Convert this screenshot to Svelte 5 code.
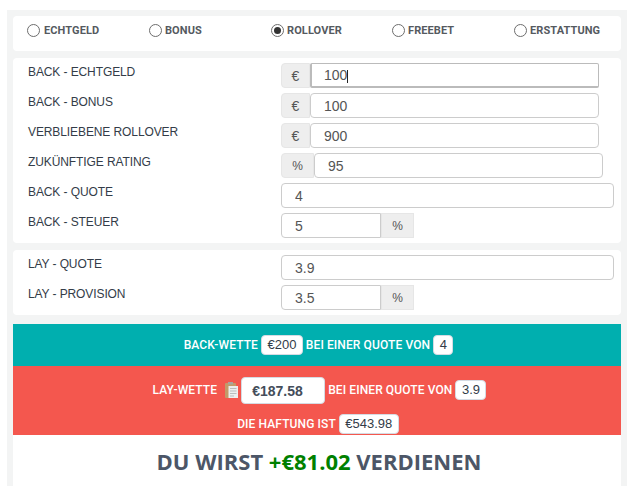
<script lang="ts">
	const kinds = [
		{ label: 'ECHTGELD', checked: false },
		{ label: 'BONUS', checked: false },
		{ label: 'ROLLOVER', checked: true },
		{ label: 'FREEBET', checked: false },
		{ label: 'ERSTATTUNG', checked: false }
	];

	const backRows = [
		{ label: 'BACK - ECHTGELD', value: '100', before: '€', focus: true },
		{ label: 'BACK - BONUS', value: '100', before: '€' },
		{ label: 'VERBLIEBENE ROLLOVER', value: '900', before: '€' },
		{ label: 'ZUKÜNFTIGE RATING', value: '95', before: '%', wide: true },
		{ label: 'BACK - QUOTE', value: '4', full: true },
		{ label: 'BACK - STEUER', value: '5', after: '%' }
	];

	const layRows = [
		{ label: 'LAY - QUOTE', value: '3.9', full: true },
		{ label: 'LAY - PROVISION', value: '3.5', after: '%' }
	];
</script>

{#snippet row(r)}
	<div class="row">
		<label class="row__label" for={r.label}>{r.label}</label>
		<div class="group" class:group--full={r.full} class:group--wide={r.wide} class:group--after={r.after}>
			{#if r.before}<span class="addon addon--before">{r.before}</span>{/if}
			<div class="field">
				<input id={r.label} class="input" class:input--focus={r.focus} type="text" value={r.value} />
				{#if r.focus}<span class="caret"></span>{/if}
			</div>
			{#if r.after}<span class="addon addon--after">{r.after}</span>{/if}
		</div>
	</div>
{/snippet}

<div class="calc">
	<section class="panel kinds">
		{#each kinds as kind}
			<label class="kind">
				<span class="radio" class:radio--on={kind.checked}></span>
				{kind.label}
			</label>
		{/each}
	</section>

	<section class="panel rows">
		{#each backRows as r}
			{@render row(r)}
		{/each}
	</section>

	<section class="panel rows">
		{#each layRows as r}
			{@render row(r)}
		{/each}
	</section>

	<section class="result">
		<div class="band band--back">
			<span>BACK-WETTE</span>
			<span class="chip">€200</span>
			<span>BEI EINER QUOTE VON</span>
			<span class="chip">4</span>
		</div>
		<div class="band band--lay">
			<div class="lay-line">
				<span>LAY-WETTE</span>
				<svg class="clip" viewBox="0 0 13 16" aria-hidden="true">
					<rect x="0" y="1" width="11" height="15" rx="1" fill="#c39a68" />
					<rect x="3.500" y="4" width="9.500" height="12" fill="#eceeee" />
					<path d="M5 6.500h6.500M5 9h6.500M5 11.500h6.500M5 14h4" stroke="#b9bdbd" stroke-width="1" />
					<rect x="3" y="0" width="5" height="2.500" fill="#a8a49c" />
				</svg>
				<span class="chip chip--big">€187.58</span>
				<span>BEI EINER QUOTE VON</span>
				<span class="chip">3.9</span>
			</div>
			<div class="liability">
				<span>DIE HAFTUNG IST</span>
				<span class="chip">€543.98</span>
			</div>
		</div>
		<h2 class="profit">DU WIRST <span class="profit__value">+€81.02</span> VERDIENEN</h2>
	</section>
</div>

<style>
	:global(body) {
		background: #fff;
		font-family: 'Liberation Sans', Arial, sans-serif;
	}

	.calc {
		box-sizing: border-box;
		width: 620px;
		height: 476px;
		margin: 10px 0 0 7px;
		padding: 6px 6px 0;
		background: #f3f4f4;
		overflow: hidden;
	}

	.panel {
		background: #fff;
		border-radius: 4px;
		margin-bottom: 7px;
	}

	.kinds {
		height: 35px;
		display: grid;
		grid-template-columns: 122px 122px 121px 122px 1fr;
		padding: 0 0 6px 14px;
		box-sizing: border-box;
		align-items: center;
	}

	.kind {
		display: flex;
		align-items: center;
		gap: 3px;
		font-family: Roboto, sans-serif;
		font-size: 11px;
		font-weight: 700;
		letter-spacing: 0.1px;
		color: #555a5f;
	}

	.kind:first-child {
		gap: 4px;
	}

	.radio {
		box-sizing: border-box;
		width: 13px;
		height: 13px;
		border: 1px solid #6d6d6d;
		border-radius: 50%;
		background: #fff;
		position: relative;
	}

	.radio--on::after {
		content: '';
		position: absolute;
		inset: 2px;
		border-radius: 50%;
		background: #333;
	}

	.rows {
		padding: 5px 0;
	}

	.row {
		display: flex;
		height: 25px;
		margin-bottom: 5px;
	}

	.row:last-child {
		margin-bottom: 0;
	}

	.row__label {
		width: 268px;
		padding-left: 15px;
		box-sizing: border-box;
		font-size: 12px;
		line-height: 18px;
		letter-spacing: -0.1px;
		color: #333c48;
	}

	.group {
		display: flex;
		width: 318px;
	}

	.group--full {
		width: 333px;
	}

	.group--wide {
		width: 322px;
	}

	.group--after {
		width: 133px;
	}

	.field {
		position: relative;
		flex: 1;
		min-width: 0;
	}

	.input {
		box-sizing: border-box;
		display: block;
		width: 100%;
		height: 25px;
		padding: 0 13px;
		border: 1px solid #ccc;
		border-radius: 4px;
		outline: none;
		background: #fff;
		font-family: 'Liberation Sans', Arial, sans-serif;
		font-size: 14px;
		color: #555;
	}

	.input--focus {
		border-color: #bbb;
		border-width: 1px 1px 2px 2px;
		border-radius: 2px;
		padding-left: 12px;
	}

	.caret {
		position: absolute;
		left: 37px;
		top: 7px;
		width: 1px;
		height: 13px;
		background: #222;
	}

	.addon {
		flex: none;
		box-sizing: border-box;
		display: flex;
		align-items: center;
		justify-content: center;
		background: #eee;
		border: 1px solid #e6e6e6;
		font-size: 12px;
		color: #555;
	}

	.addon--before {
		width: 29px;
		border-radius: 4px 0 0 4px;
		font-size: 14px;
	}

	.group--wide .addon--before {
		width: 33px;
		font-size: 12px;
	}

	.addon--after {
		width: 33px;
	}

	.group--after .input {
		border-radius: 4px 0 0 4px;
	}

	.result {
		margin-top: 9px;
		background: #fff;
	}

	.band {
		color: #fff;
		font-family: Roboto, sans-serif;
		font-size: 12px;
		font-weight: 500;
		letter-spacing: 0.1px;
		text-align: center;
	}

	.band--back {
		height: 42px;
		padding-left: 3px;
		background: #00afaf;
		display: flex;
		align-items: center;
		justify-content: center;
		gap: 3px;
	}

	.band--lay {
		height: 69px;
		background: #f4574e;
	}

	.lay-line {
		height: 48px;
		padding-left: 5px;
		display: flex;
		align-items: center;
		justify-content: center;
		gap: 3px;
	}

	.liability {
		padding-left: 2px;
		display: flex;
		align-items: center;
		justify-content: center;
		gap: 3px;
	}

	.chip {
		display: inline-block;
		box-sizing: border-box;
		height: 20px;
		line-height: 18px;
		padding: 0 5.5px;
		background: #fff;
		border: 1px solid #d5dbe3;
		border-radius: 4px;
		font-family: 'Liberation Sans', Arial, sans-serif;
		font-size: 13px;
		font-weight: 400;
		letter-spacing: 0;
		color: #333c48;
	}

	.chip--big {
		width: 84px;
		height: 27px;
		line-height: 26px;
		padding: 0 0 0 10px;
		text-align: left;
		font-size: 14px;
		font-weight: 700;
		color: #444d5a;
	}

	.clip {
		width: 13px;
		height: 16px;
		margin: -1px 0 0 5px;
	}

	.profit {
		margin: 0;
		height: 51px;
		padding-left: 4px;
		line-height: 53px;
		text-align: center;
		font-family: 'Open Sans', sans-serif;
		font-size: 22px;
		font-weight: 700;
		color: #4c5667;
	}

	.profit__value {
		color: #008000;
	}
</style>
